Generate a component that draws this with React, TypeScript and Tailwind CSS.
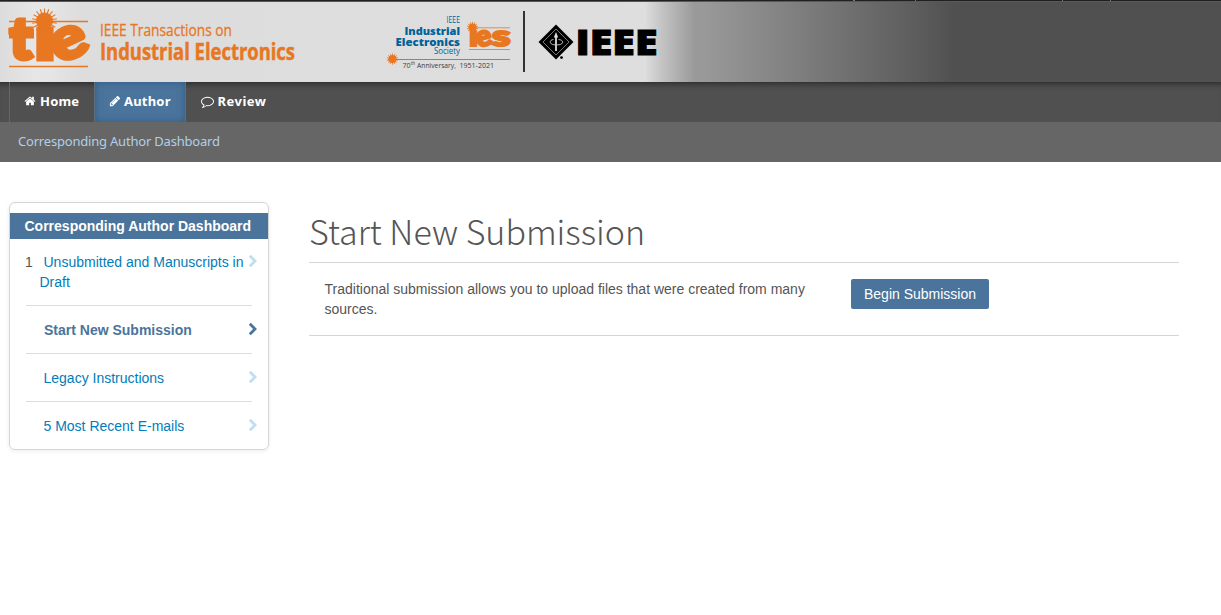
import type { ReactNode } from 'react';

const ORANGE = '#e87722';

const menuItems = [
  { count: '1', label: 'Unsubmitted and Manuscripts in Draft', active: false },
  { count: '', label: 'Start New Submission', active: true },
  { count: '', label: 'Legacy Instructions', active: false },
  { count: '', label: '5 Most Recent E-mails', active: false },
];

function Sun({ cx, cy, r, reach, rays, width }: { cx: number; cy: number; r: number; reach: number; rays: number; width: number }) {
  return (
    <g stroke={ORANGE} strokeWidth={width} fill={ORANGE}>
      <circle cx={cx} cy={cy} r={r} stroke="none" />
      {Array.from({ length: rays }, (_, i) => {
        const a = (i / rays) * Math.PI * 2 - Math.PI / 2;
        return <line key={i} x1={cx} y1={cy} x2={cx + Math.cos(a) * reach} y2={cy + Math.sin(a) * reach} />;
      })}
    </g>
  );
}

function TieLogo() {
  return (
    <svg width="300" height="80" viewBox="0 2 300 80" className="shrink-0 overflow-visible">
      <g stroke={ORANGE} strokeWidth="1.3">
        <line x1="9" y1="21.5" x2="88" y2="21.5" />
        <line x1="9" y1="66.5" x2="88" y2="66.5" />
      </g>
      <rect x="9" y="29" width="25" height="9.5" fill={ORANGE} />
      <g fill={ORANGE} stroke={ORANGE} strokeWidth="5" fontFamily="Lato, sans-serif" fontWeight="900">
        <text x="10" y="59" fontSize="57" textLength="22" lengthAdjust="spacingAndGlyphs">t</text>
        <text x="35" y="59" fontSize="57" textLength="20" lengthAdjust="spacingAndGlyphs">ı</text>
        <text x="-18" y="14" fontSize="59" strokeWidth="4" textLength="36" lengthAdjust="spacingAndGlyphs" transform="translate(69.5 44.3) rotate(-25)">e</text>
      </g>
      <Sun cx={44.5} cy={21} r={8.5} reach={12.5} rays={18} width={1.1} />
      <g fill={ORANGE} stroke={ORANGE} fontFamily="'Open Sans', sans-serif">
        <text x="100" y="36" fontSize="17" strokeWidth="0.3" textLength="132" lengthAdjust="spacingAndGlyphs">IEEE Transactions on</text>
        <text x="100" y="60" fontSize="24" strokeWidth="0.5" fontWeight="700" textLength="195" lengthAdjust="spacingAndGlyphs">Industrial Electronics</text>
      </g>
    </svg>
  );
}

function SocietyLogo() {
  return (
    <svg width="150" height="80" viewBox="380 2 150 80" className="ml-20 shrink-0">
      <g fill="#00629b" fontFamily="'Open Sans', sans-serif">
        <text x="446.5" y="23" fontSize="8.5" textLength="13.5" lengthAdjust="spacingAndGlyphs">IEEE</text>
        <text x="404.5" y="34.5" fontSize="11" fontWeight="800" textLength="55.5" lengthAdjust="spacingAndGlyphs">Industrial</text>
        <text x="395.5" y="45.5" fontSize="11" fontWeight="800" textLength="64.5" lengthAdjust="spacingAndGlyphs">Electronics</text>
        <text x="434" y="54" fontSize="8.5" textLength="26" lengthAdjust="spacingAndGlyphs">Society</text>
      </g>
      <line x1="388" y1="59.5" x2="510" y2="59.5" stroke="#5794b8" strokeWidth="1.2" />
      <Sun cx={392.5} cy={59} r={4} reach={5.7} rays={14} width={0.8} />
      <g fill="#3c3c3c" fontFamily="'Open Sans', sans-serif">
        <text x="402.5" y="67.5" fontSize="8" textLength="8" lengthAdjust="spacingAndGlyphs">70</text>
        <text x="410.7" y="65" fontSize="5" textLength="4.5" lengthAdjust="spacingAndGlyphs">th</text>
        <text x="417" y="67.5" fontSize="8" textLength="39" lengthAdjust="spacingAndGlyphs">Anniversary,</text>
        <text x="459.5" y="67.5" fontSize="8" textLength="34.5" lengthAdjust="spacingAndGlyphs">1951-2021</text>
      </g>
      <g stroke={ORANGE} strokeWidth="0.8">
        <line x1="474" y1="27.8" x2="510" y2="27.8" />
        <line x1="469" y1="49.5" x2="510" y2="49.5" />
      </g>
      <g fill={ORANGE} stroke={ORANGE} strokeWidth="2.2" fontFamily="Lato, sans-serif" fontWeight="900" fontSize="29">
        <text x="469" y="46" textLength="9" lengthAdjust="spacingAndGlyphs">ı</text>
        <text x="-8" y="7" textLength="16" lengthAdjust="spacingAndGlyphs" transform="translate(484 38.8) rotate(-15)">e</text>
        <text x="492" y="46" textLength="18.5" lengthAdjust="spacingAndGlyphs">s</text>
      </g>
      <Sun cx={472.5} cy={27.5} r={4} reach={5.7} rays={14} width={0.8} />
      <rect x="523" y="11" width="2" height="61" fill="#333" />
    </svg>
  );
}

function IeeeLogo() {
  return (
    <svg width="130" height="80" viewBox="530 2 130 80" className="shrink-0">
      <path d="M556 24.5 573.5 42 556 59.5 538.5 42Z" />
      <path d="M556 29 569 42 556 55 543 42Z" fill="none" stroke="#aaa" strokeWidth="0.7" />
      <path d="M556 35V51" stroke="#ddd" strokeWidth="1.8" />
      <path d="M553.5 39.5C549 40 549 44 554 44.8H559C564 44 564 40 558.5 39.5" fill="none" stroke="#ccc" strokeWidth="0.9" />
      <path d="M553.8 37.5 556 32 558.2 37.5Z" fill="#ddd" />
      <circle cx="561.5" cy="57.6" r="1.4" />
      <text x="575.5" y="54.8" fontFamily="'Open Sans', sans-serif" fontWeight="800" fontSize="35.5" stroke="#000" strokeWidth="1" textLength="82" lengthAdjust="spacingAndGlyphs">IEEE</text>
    </svg>
  );
}

function Icon({ path, size = 14 }: { path: string; size?: number }) {
  return (
    <svg width={size} height={size} viewBox="0 0 1792 1792" fill="currentColor" className="shrink-0">
      <path d={path} />
    </svg>
  );
}

const homePath = 'M1472 992v480q0 26-19 45t-45 19h-384v-384h-256v384h-384q-26 0-45-19t-19-45v-480q0-1 .5-3t.5-3l575-474 575 474q1 2 1 6zm223-69l-62 74q-8 9-21 11h-3q-13 0-21-7l-692-577-692 577q-12 8-24 7-13-2-21-11l-62-74q-8-10-7-23.5t11-21.5l719-599q32-26 76-26t76 26l244 204v-195q0-14 9-23t23-9h192q14 0 23 9t9 23v408l219 182q10 8 11 21.5t-7 23.5z';
const pencilPath = 'M491 1536l91-91-235-235-91 91v107h128v128h107zm523-928q0-22-22-22-10 0-17 7l-542 542q-7 7-7 17 0 22 22 22 10 0 17-7l542-542q7-7 7-17zm-54-192l416 416-832 832h-416v-416zm683 96q0 53-37 90l-166 166-416-416 166-165q36-38 90-38 53 0 91 38l235 234q37 39 37 91z';
const commentPath = 'M896 384q-204 0-381.5 69.5t-282 187.5-104.5 255q0 112 71.5 213.5t201.5 175.5l87 50-27 96q-24 91-70 172 152-63 275-171l43-38 57 6q69 8 130 8 204 0 381.5-69.5t282-187.5 104.5-255-104.5-255-282-187.5-381.5-69.5zm896 512q0 174-120 321.5t-326 233-450 85.5q-70 0-145-8-198 175-460 242-49 14-114 22h-5q-15 0-27-10.5t-16-27.5v-1q-3-4-.5-12t2-10 4.5-9.5l6-9 7-8.5 8-9q7-8 31-34.5t34.5-38 31-39.5 32.5-51 27-59 26-76q-157-89-247.5-220t-90.5-281q0-174 120-321.5t326-233 450-85.5 450 85.5 326 233 120 321.5z';

function NavTab({ className, children }: { className: string; children: ReactNode }) {
  return (
    <a href="#" className={`flex h-10 items-center pb-0.5 text-[13px] font-bold text-white ${className}`}>
      {children}
    </a>
  );
}

function Chevron({ active }: { active: boolean }) {
  return (
    <svg width="10" height="14" viewBox="0 0 10 14" className={`shrink-0 ${active ? 'text-[#4a749b]' : 'text-[#bfdfef]'}`}>
      <path d="M1.8 1.8 7 7 1.8 12.2" fill="none" stroke="currentColor" strokeWidth="2.8" />
    </svg>
  );
}

export default function App() {
  return (
    <div className="min-h-[615px] w-full bg-white font-['Liberation_Sans',Arial,sans-serif] text-sm leading-5 text-[#555]">
      <div className="flex h-0.5 bg-[#231f20] border-b border-[#5c585a]">
        <span className="ml-[853px] h-px w-0.5 bg-[#777]" />
        <span className="ml-[60px] h-px w-px bg-[#777]" />
        <span className="ml-[146px] h-px w-px bg-[#777]" />
        <span className="ml-[47px] h-px w-px bg-[#777]" />
      </div>
      <header className="flex h-20 bg-[linear-gradient(90deg,#dcdcdc_0,#e6e6e6_35px,#e5e5e5_50px,#dddddd_80px,#dedede_645px,#c6c6c6_660px,#999_695px,#999_705px,#5a5a5a_925px,#505050_955px)]">
        <TieLogo />
        <SocietyLogo />
        <IeeeLogo />
      </header>

      <nav className="flex h-10 bg-[#505050] pl-[9px] font-['Noto_Sans','Open_Sans',sans-serif] shadow-[inset_0_7px_7px_-6px_#222]">
        <NavTab className="w-[85px] border-l border-[#666] pl-3.5">
          <Icon path={homePath} size={12} />
          <span className="ml-1 tracking-[0.2px]">Home</span>
        </NavTab>
        <NavTab className="w-[92px] border-x border-[#5c6d7e] bg-[#4a749b] pl-3.5 shadow-[inset_0_0_7px_#315b83]">
          <Icon path={pencilPath} size={12} />
          <span className="ml-[3px] tracking-[0.2px]">Author</span>
        </NavTab>
        <NavTab className="pl-[15px]">
          <Icon path={commentPath} size={13} />
          <span className="ml-[3.5px] tracking-[0.5px]">Review</span>
        </NavTab>
      </nav>
      <div className="flex h-10 items-center bg-[#666] pb-0.5 pl-[18px] font-['Noto_Sans','Open_Sans',sans-serif] text-[13px] tracking-[-0.2px] text-[#b1cfe9]">
        <a href="#">Corresponding Author Dashboard</a>
      </div>

      <main className="flex items-start pt-10 pl-[9px]">
        <aside className="h-[248px] w-[260px] shrink-0 rounded-md border border-[#d5d5d5] pt-[10px] shadow-[0_1px_4px_rgba(0,0,0,0.08)]">
          <h2 className="h-[26px] bg-[#4a749b] pl-[14.5px] text-sm leading-[26px] font-bold text-white">
            Corresponding Author Dashboard
          </h2>
          <ul className="pl-4">
            {menuItems.map((item, i) => (
              <li key={item.label} className="flex">
                <a
                  href="#"
                  className={`flex w-[226px] shrink-0 ${i === 0 ? 'h-[67px] pt-[13px]' : 'h-12 pt-3.5'} ${i < 3 ? 'border-b border-[#ddd]' : ''} ${item.active ? 'font-bold text-[#4a749b]' : 'text-[#007dba]'}`}
                >
                  <span className="-ml-0.5 w-[15.5px] shrink-0 pl-px text-[#555]">{item.count}</span>
                  <span className={`w-[216px] shrink-0 ${item.active ? 'indent-[4.5px]' : 'indent-1'}`}>{item.label}</span>
                </a>
                <span className={`-ml-1 ${i === 0 ? 'pt-[15px]' : 'pt-4'}`}>
                  <Chevron active={item.active} />
                </span>
              </li>
            ))}
          </ul>
        </aside>

        <section className="ml-10 w-[870px] shrink-0">
          <h1 className="h-[61px] border-b border-[#d5d5d5] pt-1.5 font-['Noto_Sans_CJK_SC',sans-serif] text-[34px] leading-[46px] font-light whitespace-nowrap">
            Start New Submission
          </h1>
          <div className="flex h-[73px] items-start border-b border-[#d5d5d5] pt-4 pl-[15.5px]">
            <p className="w-[526.5px] shrink-0 pr-8">
              Traditional submission allows you to upload files that were created from many sources.
            </p>
            <button className="h-[30px] w-[138px] rounded-xs bg-[#4a749b] text-sm text-white">Begin Submission</button>
          </div>
        </section>
      </main>
    </div>
  );
}
